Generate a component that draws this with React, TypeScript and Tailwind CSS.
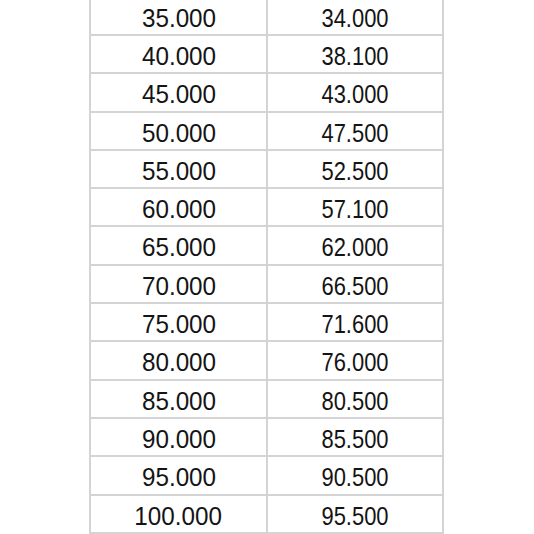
import React from "react";

const rows = [
  ["35.000", "34.000"],
  ["40.000", "38.100"],
  ["45.000", "43.000"],
  ["50.000", "47.500"],
  ["55.000", "52.500"],
  ["60.000", "57.100"],
  ["65.000", "62.000"],
  ["70.000", "66.500"],
  ["75.000", "71.600"],
  ["80.000", "76.000"],
  ["85.000", "80.500"],
  ["90.000", "85.500"],
  ["95.000", "90.500"],
  ["100.000", "95.500"],
];

const App = () => {
  return (
    <div className="h-[534px] w-[534px] overflow-hidden bg-white">
      <div
        className="ml-[89px] mt-[-2.3px] w-[355px] border-l-2 border-[#d4d4d4] text-[25.5px] text-[#141414]"
        style={{ fontFamily: '"Liberation Sans", Arial, sans-serif' }}
      >
        {rows.map(([a, b], i) => (
          <div key={i} className="grid h-[38.3px] grid-cols-[177px_176px] border-b-2 border-[#d4d4d4]">
            <div className="flex items-center justify-center border-r-2 border-[#d4d4d4] pt-[1px]">
              <span className="inline-block scale-x-[0.95]">{a}</span>
            </div>
            <div className="flex items-center justify-center border-r-2 border-[#d4d4d4] pt-[1px]">
              <span className="inline-block scale-x-[0.86]">{b}</span>
            </div>
          </div>
        ))}
      </div>
    </div>
  );
};

export default App;
